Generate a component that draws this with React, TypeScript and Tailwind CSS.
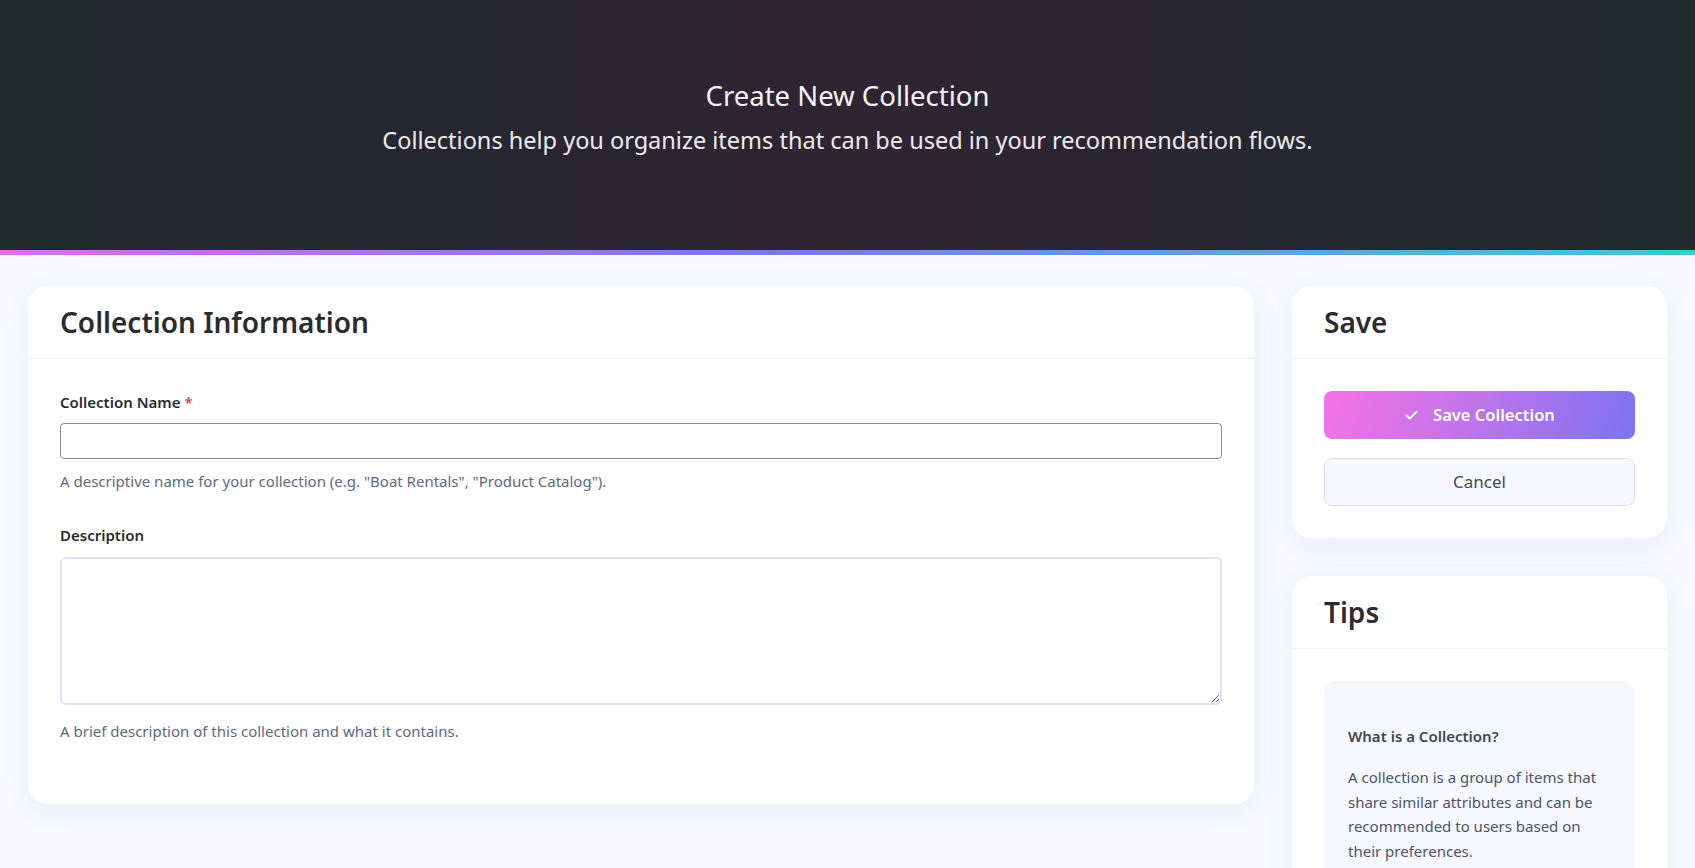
import React from 'react';
import { Check } from 'lucide-react';

const Card: React.FC<{ title: string; children: React.ReactNode; bodyClass?: string }> = ({ title, children, bodyClass }) => (
  <div className="bg-white rounded-[20px] shadow-[0_6px_28px_rgba(99,102,241,0.07)]">
    <div className="h-[73px] flex items-center px-8 border-b border-[#eeeef8]">
      <h2 className="text-[28px] font-semibold text-[#2b2b30] leading-none">{title}</h2>
    </div>
    <div className={bodyClass ?? 'p-8'}>{children}</div>
  </div>
);

export default function App() {
  return (
    <div className="min-h-screen bg-[#f8f8fe] font-['Noto_Sans',sans-serif]">
      {/* Hero */}
      <header className="h-[250px] bg-[linear-gradient(90deg,#212c2b_0%,#262731_25%,#2e2531_50%,#272731_75%,#212c2d_100%)] text-center pt-[78px]">
        <h1 className="text-[27.5px] leading-[36px] text-[#f4f4f6] font-normal">Create New Collection</h1>
        <p className="mt-[10px] text-[23.5px] leading-[32px] text-[#ececf0]">
          Collections help you organize items that can be used in your recommendation flows.
        </p>
      </header>
      <div className="h-[5px] bg-[linear-gradient(90deg,#d671ea_0%,#7b78f1_45%,#5fa3e3_75%,#3ccbcf_100%)]" />

      <main className="grid grid-cols-[1fr_375px] gap-[38px] px-7 pt-[31px] pb-10 items-start">
        {/* Collection form */}
        <Card title="Collection Information" bodyClass="px-8 pt-[32px] pb-[62px]">
          <label className="block text-[15px] leading-[22px] font-semibold text-[#2b2b30] mb-[10px]">
            Collection Name <span className="text-[#e0474c]">*</span>
          </label>
          <input type="text" className="block w-full h-[36px] rounded-[4px] border border-[#8c8c8c] px-3 text-sm outline-none" />
          <p className="mt-[11px] text-[15px] leading-[22px] text-[#5b6b82]">
            A descriptive name for your collection (e.g. "Boat Rentals", "Product Catalog").
          </p>

          <label className="block mt-[32px] text-[15px] leading-[22px] font-semibold text-[#2b2b30] mb-[11px]">
            Description
          </label>
          <textarea className="block w-full h-[148px] rounded-[6px] border-2 border-[#e2e0fb] px-3 py-2 text-sm outline-none" />
          <p className="mt-[15px] text-[15px] leading-[22px] text-[#5b6b82]">
            A brief description of this collection and what it contains.
          </p>
        </Card>

        {/* Sidebar */}
        <div className="flex flex-col gap-[38px]">
          <Card title="Save">
            <div className="flex flex-col gap-[19px]">
              <button className="h-12 rounded-lg bg-[linear-gradient(110deg,#f573e4_0%,#c374ea_45%,#7b74f2_100%)] text-white text-[16.5px] font-semibold flex items-center justify-center gap-[14px]">
                <Check className="w-[15px] h-[15px]" strokeWidth={3} />
                Save Collection
              </button>
              <button className="h-12 rounded-lg bg-[#f7f8fe] border border-[#dcdafa] text-[#4a4a50] text-[17px]">
                Cancel
              </button>
            </div>
          </Card>

          <Card title="Tips">
            <div className="bg-[#f7f8fd] rounded-xl px-6 pt-[44px] pb-6">
              <h3 className="text-[15px] leading-[22px] font-semibold text-[#3f4654]">What is a Collection?</h3>
              <p className="mt-[18px] text-[15px] leading-[24.5px] text-[#4b5566]">
                A collection is a group of items that share similar attributes and can be recommended to users based on
                their preferences.
              </p>
            </div>
          </Card>
        </div>
      </main>
    </div>
  );
}
